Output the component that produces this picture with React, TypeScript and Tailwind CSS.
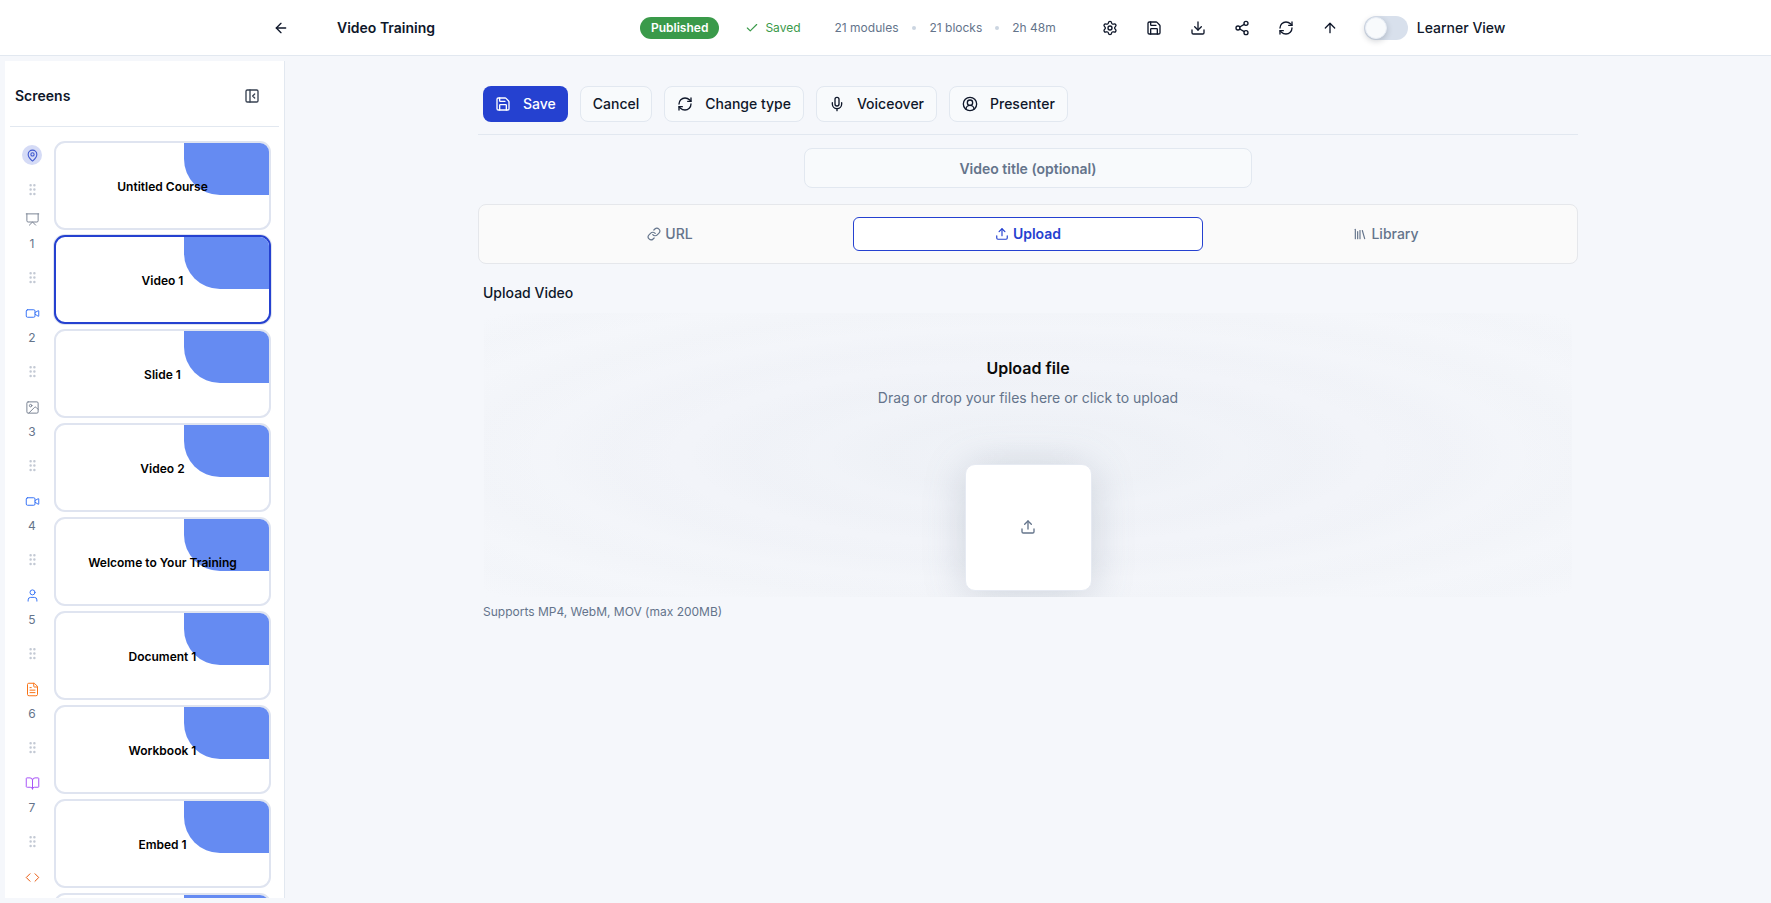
import {
  ArrowLeft,
  ArrowUp,
  BookOpen,
  Check,
  CircleUserRound,
  Code,
  Download,
  FileText,
  GripVertical,
  Image,
  Library,
  Link,
  MapPin,
  Mic,
  PanelLeftClose,
  Presentation,
  RefreshCw,
  Save,
  Settings,
  Share2,
  Upload,
  User,
  Video,
  type LucideIcon,
} from "lucide-react";

type Screen = {
  title: string;
  icon: LucideIcon;
  iconClass: string;
};

const screens: Screen[] = [
  { title: "Untitled Course", icon: Presentation, iconClass: "text-[#7c8595]" },
  { title: "Video 1", icon: Video, iconClass: "text-[#3b76f6]" },
  { title: "Slide 1", icon: Image, iconClass: "text-[#7c8595]" },
  { title: "Video 2", icon: Video, iconClass: "text-[#3b76f6]" },
  { title: "Welcome to Your Training", icon: User, iconClass: "text-[#3b76f6]" },
  { title: "Document 1", icon: FileText, iconClass: "text-[#f97316]" },
  { title: "Workbook 1", icon: BookOpen, iconClass: "text-[#a855f7]" },
  { title: "Embed 1", icon: Code, iconClass: "text-[#ea580c]" },
];

const headerIcons = [Settings, Save, Download, Share2, RefreshCw, ArrowUp];

function Thumbnail({ title, selected }: { title?: string; selected?: boolean }) {
  return (
    <div
      className={
        "relative ml-[5px] h-[89px] w-[217px] overflow-hidden rounded-[11px] border-2 bg-white " +
        (selected
          ? "border-[#2541d0] shadow-[0_0_0_1px_#dfe4f0]"
          : "border-[#dfe4f0]")
      }
    >
      <div className="absolute top-0 right-0 h-[52px] w-[85px] rounded-bl-[36px] bg-[#658bf2]" />
      <div className="relative flex h-full items-center justify-center pt-[2px] text-[12px] font-semibold text-black">
        {title}
      </div>
    </div>
  );
}

function ScreenRow({ screen, index }: { screen: Screen; index: number }) {
  const Icon = screen.icon;

  return (
    <div className="flex h-[94px] shrink-0 items-start">
      {/* Rail */}
      <div className="flex w-[44px] flex-col items-center pl-[10px]">
        <div className={"flex w-full flex-col items-center " + (index === 0 ? "h-[33px]" : "h-[28px]")}>
          {index === 0 ? (
            <div className="flex size-[20px] translate-y-[4px] items-center justify-center rounded-full bg-[#d5dbf6]">
              <MapPin size={13} className="text-[#3f58cf]" />
            </div>
          ) : (
            <span className="text-[12px] leading-[18px] text-[#64748b]">{index}</span>
          )}
        </div>
        <GripVertical size={15} className={"text-[#c3c9d4] " + (index === 0 ? "mt-[8px]" : "mt-[7px]")} />
        <Icon
          size={15}
          strokeWidth={1.6}
          className={screen.iconClass + (index === 0 ? " mt-[15px]" : " mt-[21px]")}
        />
      </div>

      <Thumbnail title={screen.title} selected={index === 1} />
    </div>
  );
}

function ToolButton({ icon: Icon, label }: { icon?: LucideIcon; label: string }) {
  return (
    <button className="flex h-[36px] items-center gap-[12px] rounded-[8px] border border-[#e2e8f0] bg-[#f8fafc] px-[12px] pb-[1px] text-[14px] font-medium text-[#0f172a]">
      {Icon && <Icon size={16} />}
      {label}
    </button>
  );
}

export default function App() {
  return (
    <div className="flex h-[903px] flex-col overflow-hidden bg-[#f5f7fb] font-['Inter',sans-serif]">
      {/* Header */}
      <header className="flex h-[56px] shrink-0 items-center border-b border-[#e2e8f0] bg-white pl-[273px]">
        <ArrowLeft size={16} className="text-[#0f172a]" />
        <h1 className="ml-[48px] w-[303px] text-[14px] font-semibold text-[#0f172a]">Video Training</h1>
        <span className="flex h-[22px] items-center rounded-full bg-[#3a9a4a] px-[11px] text-[12px] font-semibold text-white">
          Published
        </span>
        <Check size={14} className="ml-[26px] text-[#3a9a4a]" />
        <span className="ml-[6px] text-[12px] text-[#3a9a4a]">Saved</span>
        <span className="ml-[34px] text-[12px] text-[#64748b]">21 modules</span>
        <span className="mr-[13px] ml-[14px] size-[4px] rounded-full bg-[#cbd5e1]" />
        <span className="text-[12px] text-[#64748b]">21 blocks</span>
        <span className="mx-[13px] size-[4px] rounded-full bg-[#cbd5e1]" />
        <span className="text-[12px] text-[#64748b]">2h 48m</span>
        <div className="ml-[46px] flex items-center gap-[28px]">
          {headerIcons.map((Icon, i) => (
            <Icon key={i} size={16} className="text-[#0f172a]" />
          ))}
        </div>
        <div className="ml-[26px] flex h-[24px] w-[44px] items-center rounded-full bg-[#d8e0ec] pl-[1px]">
          <div className="size-[22px] rounded-full border border-[#e8edf5] bg-[#f8fafc] shadow-[0_2px_6px_rgba(15,23,42,0.2)]" />
        </div>
        <span className="ml-[9px] text-[14px] font-medium text-[#0f172a]">Learner View</span>
      </header>

      <div className="flex min-h-0 flex-1">
        {/* Screens sidebar */}
        <aside className="mt-[5px] ml-[5px] flex h-[837px] w-[280px] shrink-0 flex-col overflow-hidden border-r border-[#e2e8f0] bg-white">
          <div className="mx-[5px] flex h-[66px] shrink-0 items-center justify-between border-b border-[#e2e8f0] pt-[4px] pr-[19px] pl-[5px]">
            <span className="text-[14px] font-semibold text-[#0f172a]">Screens</span>
            <PanelLeftClose size={16} className="text-[#374151]" />
          </div>
          <div className="flex flex-col pt-[14px]">
            {screens.map((s, i) => (
              <ScreenRow key={s.title} screen={s} index={i} />
            ))}
            {/* next card peeks in under the fold */}
            <div className="flex pl-[44px]">
              <Thumbnail />
            </div>
          </div>
        </aside>

        {/* Editor */}
        <main className="flex flex-1 justify-center pt-[30px]">
          <div className="w-[1100px]">
            <div className="flex gap-[12px] border-b border-[#e2e8f0] pb-[12px] pl-[5px]">
              <button className="flex h-[36px] items-center gap-[12px] rounded-[8px] bg-[#2541d0] px-[12px] pb-[1px] text-[14px] font-medium text-white">
                <Save size={16} />
                Save
              </button>
              <ToolButton label="Cancel" />
              <ToolButton icon={RefreshCw} label="Change type" />
              <ToolButton icon={Mic} label="Voiceover" />
              <ToolButton icon={CircleUserRound} label="Presenter" />
            </div>

            <div className="mt-[13px] flex justify-center">
              <div className="flex h-[40px] w-[448px] items-center justify-center rounded-[8px] border border-[#e2e8f0] bg-[#f8fafc] text-[14px] font-semibold text-[#64748b]">
                Video title (optional)
              </div>
            </div>

            <div className="mt-[16px] grid grid-cols-3 gap-[8px] rounded-[8px] border border-[#e5e7eb] bg-[#fafafa] px-[16px] py-[12px]">
              <div className="flex h-[34px] items-center justify-center gap-[4px] pb-[1px] text-[14px] font-medium text-[#64748b]">
                <Link size={14} />
                URL
              </div>
              <div className="flex h-[34px] items-center justify-center gap-[4px] rounded-[6px] border border-[#2541d0] bg-white pb-[1px] text-[14px] font-semibold text-[#2541d0]">
                <Upload size={14} />
                Upload
              </div>
              <div className="flex h-[34px] items-center justify-center gap-[4px] pb-[1px] text-[14px] font-medium text-[#64748b]">
                <Library size={14} />
                Library
              </div>
            </div>

            <div className="mt-[19px] pl-[5px] text-[14px] leading-[20px] font-medium text-[#0f172a]">Upload Video</div>

            <div className="mt-[10px] ml-[6px] flex h-[284px] w-[1088px] flex-col items-center overflow-hidden bg-[repeating-radial-gradient(ellipse_at_center,rgba(100,116,139,0.012)_0%,rgba(100,116,139,0)_9%,rgba(100,116,139,0.012)_18%),radial-gradient(ellipse_at_center,#eff2f7_0%,#f2f4f9_45%,#f4f6fa_75%,#f5f7fb_100%)] pt-[45px]">
              <div className="text-[16px] leading-[20px] font-semibold text-[#0a0a0a]">Upload file</div>
              <div className="mt-[10px] text-[14px] leading-[20px] text-[#64748b]">
                Drag or drop your files here or click to upload
              </div>
              <div className="mt-[56px] flex h-[127px] w-[127px] shrink-0 items-center justify-center rounded-[10px] border border-[#e6eaf2] bg-white pb-[2px] shadow-[0_4px_40px_rgba(100,116,139,0.25)]">
                <Upload size={16} className="text-[#64748b]" />
              </div>
            </div>

            <p className="mt-[7px] pl-[5px] text-[12px] leading-[16px] text-[#64748b]">
              Supports MP4, WebM, MOV (max 200MB)
            </p>
          </div>
        </main>
      </div>
    </div>
  );
}
